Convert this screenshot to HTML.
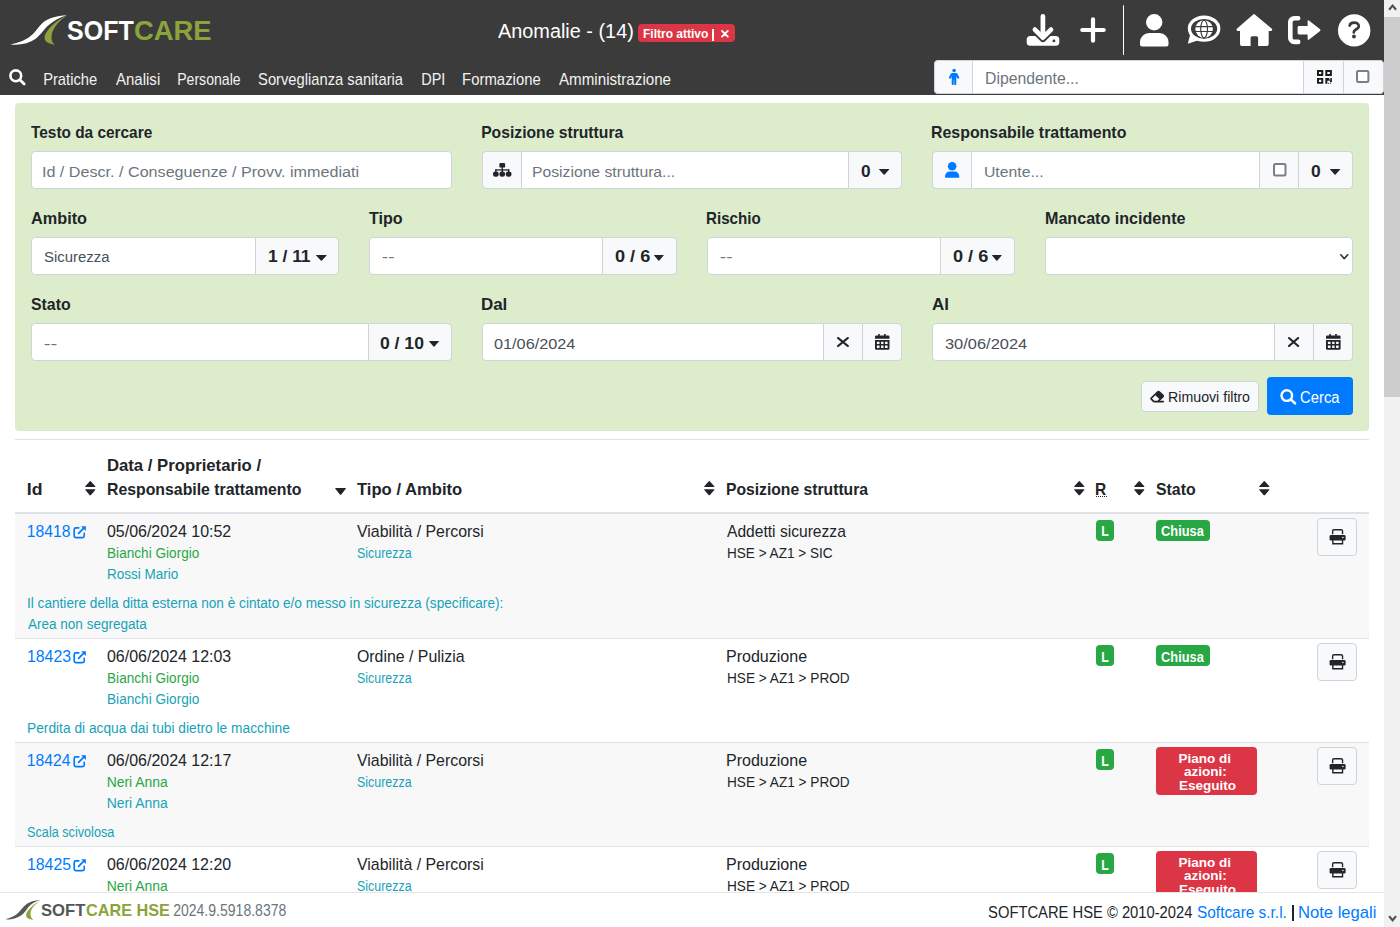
<!DOCTYPE html>
<html><head><meta charset="utf-8"><title>Anomalie</title>
<style>
html,body{margin:0;padding:0;width:1400px;height:927px;overflow:hidden;background:#fff;font-family:"Liberation Sans",sans-serif}
.t{position:absolute;white-space:nowrap;font-family:"Liberation Sans",sans-serif}
.r{position:absolute}
.s{position:absolute;overflow:visible}
</style></head><body>
<div class="r" style="left:0px;top:0px;width:1384px;height:95px;background:#3b3b3b;box-sizing:border-box;"></div>
<svg class="s" style="left:0px;top:0px;width:80px;height:50px;" viewBox="0 0 80 50" preserveAspectRatio="none"><path fill="#fff" d="M10.5,44.5 C18,43 27,40 33,34 C37,30 39,26 43,22.5 C48,18.5 56,15.5 67,15.2 C60,17 53,21 47,26.5 C43,31 40,35 36,38.5 C29,43.5 20,45.5 10.5,44.5 Z"/><path fill="#8ca33c" d="M67,15.5 C58,19.5 50,26 46,33 C43,38 44,43 55,45 C51,42 50.5,37 53,30.5 C56,24 61,19 67,15.5 Z"/></svg>
<div class="t" style="left:66.62px;top:17px;font-size:27.75px;line-height:27.75px;color:#fff;font-weight:bold;transform:scaleX(0.9006);transform-origin:0.78px 0;">SOFT</div>
<div class="t" style="left:133.76px;top:17px;font-size:27.75px;line-height:27.75px;color:#8ca33c;font-weight:bold;transform:scaleX(0.9866);transform-origin:1.14px 0;">CARE</div>
<div class="t" style="left:498.36px;top:21px;font-size:20.35px;line-height:20.35px;color:#fff;transform:scaleX(0.9767);transform-origin:0.04px 0;">Anomalie - (14)</div>
<div class="r" style="left:638px;top:24px;width:97px;height:18px;background:#dc3545;box-sizing:border-box;border-radius:4px;"></div>
<div class="t" style="left:642.77px;top:28px;font-size:12.50px;line-height:12.50px;color:#fff;font-weight:bold;transform:scaleX(0.9588);transform-origin:0.82px 0;">Filtro attivo</div>
<div class="r" style="left:711.8px;top:29px;width:2.0px;height:12px;background:#fff;box-sizing:border-box;"></div>
<svg class="s" style="left:720.8px;top:29.6px;width:7.800000000000068px;height:7.699999999999996px;" viewBox="0 0 8 8" preserveAspectRatio="none"><path d="M1,1 L7,7 M7,1 L1,7" stroke="#fff" stroke-width="1.9" stroke-linecap="round"/></svg>
<svg class="s" style="left:1026px;top:14px;width:34px;height:32px;" viewBox="0 0 34 32" preserveAspectRatio="none"><rect x="0.7" y="21.9" width="32.6" height="9.9" rx="3.6" fill="#fff"/><path d="M10.5,18.2 L16.9,24.4 L23.3,18.2" fill="none" stroke="#3b3b3b" stroke-width="7.2" stroke-linecap="round" stroke-linejoin="round"/><path d="M16.9,2.3 V21 M8.9,15.6 L16.9,23.7 L25,15.6" fill="none" stroke="#fff" stroke-width="4.7" stroke-linecap="round" stroke-linejoin="round"/><circle cx="27.9" cy="26.9" r="1.45" fill="#3b3b3b"/></svg>
<svg class="s" style="left:1080px;top:17px;width:26px;height:26px;" viewBox="0 0 26 26" preserveAspectRatio="none"><path d="M13,2.3 V23.7 M2.3,13 H23.7" stroke="#fff" stroke-width="4.2" stroke-linecap="round"/></svg>
<div class="r" style="left:1122.8px;top:4.9px;width:1.6000000000001364px;height:50.300000000000004px;background:#fff;box-sizing:border-box;border-radius:1px;"></div>
<svg class="s" style="left:1139.7px;top:13.7px;width:28.5px;height:32.400000000000006px;" viewBox="0 0 28.5 32.4" preserveAspectRatio="none"><circle cx="14.2" cy="8.2" r="8.2" fill="#fff"/><path fill="#fff" d="M9,19 h10.5 a9,9 0 0 1 9,9 v2.4 a2,2 0 0 1 -2,2 h-24.5 a2,2 0 0 1 -2,-2 v-2.4 a9,9 0 0 1 9,-9 z"/></svg>
<svg class="s" style="left:1188px;top:15.7px;width:32.40000000000009px;height:28.2px;" viewBox="0 0 32.4 28.2" preserveAspectRatio="none"><path fill="#fff" fill-rule="evenodd" d="M-0.2,12.6 A16.3,13.2 0 1 1 32.4,12.6 A16.3,13.2 0 1 1 -0.2,12.6 Z M3,12.8 A13.1,9.9 0 1 0 29.2,12.8 A13.1,9.9 0 1 0 3,12.8 Z"/><path fill="#fff" d="M2.2,18.5 L9.5,24.6 L-0.2,27.8 Z"/><circle cx="16.1" cy="13.1" r="8.8" fill="#fff"/><path fill="none" stroke="#3b3b3b" stroke-width="1.15" d="M7,10.6 H25.2 M7,15.5 H25.2"/><ellipse cx="16.1" cy="13.1" rx="3.4" ry="8.8" fill="none" stroke="#3b3b3b" stroke-width="1.15"/></svg>
<svg class="s" style="left:1235.7px;top:13.9px;width:36.299999999999955px;height:32.2px;" viewBox="0 0 36.3 32.2" preserveAspectRatio="none"><path fill="#fff" d="M17.2,0.4 a1.2,1.2 0 0 1 1.6,0 L35.6,14.6 a1.3,1.3 0 0 1 -0.8,2.4 h-2.1 v12.9 a2,2 0 0 1 -2,2 h-8.6 v-8.1 a1.6,1.6 0 0 0 -1.6,-1.6 h-4.3 a1.6,1.6 0 0 0 -1.6,1.6 v8.1 h-8.6 a2,2 0 0 1 -2,-2 v-12.9 h-2.1 a1.3,1.3 0 0 1 -0.8,-2.4 Z"/></svg>
<svg class="s" style="left:1287.9px;top:15.7px;width:32.799999999999955px;height:28.2px;" viewBox="0 0 32.8 28.2" preserveAspectRatio="none"><path fill="none" stroke="#fff" stroke-width="4.6" stroke-linecap="round" d="M10.2,2.3 H6.3 a4,4 0 0 0 -4,4 V21.9 a4,4 0 0 0 4,4 H10.2"/><path fill="#fff" d="M11,10 H19.6 V5.6 Q19.6,3.5 21.2,4.8 L32.1,13.3 Q32.9,14.2 32.1,15.1 L21.2,23.4 Q19.6,24.7 19.6,22.6 V18.4 H11 Q9.6,18.4 9.6,17 V11.4 Q9.6,10 11,10 Z"/></svg>
<svg class="s" style="left:1337.9px;top:13.6px;width:32.399999999999864px;height:32.8px;" viewBox="0 0 32.4 32.8" preserveAspectRatio="none"><circle cx="16.2" cy="16.4" r="16.2" fill="#fff"/><path fill="none" stroke="#3b3b3b" stroke-width="2.7" stroke-linecap="round" stroke-linejoin="round" d="M11.7,11.6 C12,9.6 13.9,8.6 16.2,8.6 C18.8,8.6 20.8,10.1 20.8,12.3 C20.8,14.3 18.8,15.1 16.8,16.3 Q15.8,17 15.8,18.4"/><circle cx="16" cy="22.5" r="1.95" fill="#3b3b3b"/></svg>
<svg class="s" style="left:9.2px;top:69px;width:16.7px;height:16px;" viewBox="0 0 16.7 16" preserveAspectRatio="none"><circle cx="6.8" cy="6.8" r="5.4" fill="none" stroke="#fff" stroke-width="2.6"/><path d="M10.8,10.8 L15.2,14.9" stroke="#fff" stroke-width="2.8" stroke-linecap="round"/></svg>
<div class="t" style="left:43.26px;top:71px;font-size:16.40px;line-height:16.40px;color:#f2f2f2;transform:scaleX(0.8986);transform-origin:1.34px 0;">Pratiche</div>
<div class="t" style="left:115.57px;top:71px;font-size:16.40px;line-height:16.40px;color:#f2f2f2;transform:scaleX(0.9156);transform-origin:0.03px 0;">Analisi</div>
<div class="t" style="left:176.76px;top:71px;font-size:16.40px;line-height:16.40px;color:#f2f2f2;transform:scaleX(0.8595);transform-origin:1.34px 0;">Personale</div>
<div class="t" style="left:258.06px;top:71px;font-size:16.40px;line-height:16.40px;color:#f2f2f2;transform:scaleX(0.8989);transform-origin:0.74px 0;">Sorveglianza sanitaria</div>
<div class="t" style="left:421.06px;top:71px;font-size:16.40px;line-height:16.40px;color:#f2f2f2;transform:scaleX(0.8862);transform-origin:1.34px 0;">DPI</div>
<div class="t" style="left:461.86px;top:71px;font-size:16.40px;line-height:16.40px;color:#f2f2f2;transform:scaleX(0.9086);transform-origin:1.34px 0;">Formazione</div>
<div class="t" style="left:558.77px;top:71px;font-size:16.40px;line-height:16.40px;color:#f2f2f2;transform:scaleX(0.9248);transform-origin:0.03px 0;">Amministrazione</div>
<div class="r" style="left:934px;top:60px;width:450px;height:34px;background:#fff;box-sizing:border-box;border:1px solid #ced4da;border-radius:4px;"></div>
<div class="r" style="left:934px;top:60px;width:39px;height:34px;background:#f8f9fa;box-sizing:border-box;border:1px solid #ced4da;border-radius:4px 0 0 4px;"></div>
<div class="r" style="left:1303px;top:60px;width:41px;height:34px;background:#f8f9fa;box-sizing:border-box;border:1px solid #ced4da;"></div>
<div class="r" style="left:1343px;top:60px;width:41px;height:34px;background:#f8f9fa;box-sizing:border-box;border:1px solid #ced4da;border-radius:0 4px 4px 0;"></div>
<svg class="s" style="left:948.7px;top:69px;width:10.399999999999977px;height:16px;" viewBox="0 0 10.4 16" preserveAspectRatio="none"><circle cx="5.1" cy="1.6" r="1.75" fill="#007bff"/><path fill="#007bff" d="M3.2,4 H7 a1.6,1.6 0 0 1 1.4,0.8 L10.2,8.2 a1,1 0 0 1 -1.8,1 L7.3,7.5 V15 a1,1 0 0 1 -1,1 h-0.3 a0.8,0.8 0 0 1 -0.8,-0.8 V11 h-0.4 V15.2 a0.8,0.8 0 0 1 -0.8,0.8 h-0.3 a1,1 0 0 1 -1,-1 V7.5 L1.8,9.2 a1,1 0 0 1 -1.8,-1 L1.8,4.8 a1.6,1.6 0 0 1 1.4,-0.8 Z"/></svg>
<div class="t" style="left:984.93px;top:71px;font-size:16.70px;line-height:16.70px;color:#6c757d;transform:scaleX(0.9444);transform-origin:1.37px 0;">Dipendente...</div>
<svg class="s" style="left:1316.7px;top:69.9px;width:14.899999999999864px;height:13.799999999999997px;" viewBox="0 0 15 13.8" preserveAspectRatio="none"><g fill="#1c1c1c"><path fill-rule="evenodd" d="M0,0 h6.3 v5.9 h-6.3z M2,1.9 v2.1 h2.3 v-2.1z"/><path fill-rule="evenodd" d="M8.4,0 h6.6 v5.9 h-6.6z M10.4,1.9 v2.1 h2.6 v-2.1z"/><path fill-rule="evenodd" d="M0,7.9 h6.3 v5.9 h-6.3z M2,9.8 v2.1 h2.3 v-2.1z"/><path d="M8.4,7.9 h2 v5.9 h-2z M10.4,7.9 h1.4 l1.6,2.4 v-2.4 h1.6 v4.3 h-1.4 l-1.6,-2.4 v1 h-1.6z"/><rect x="11" y="12.8" width="1" height="1"/><rect x="13" y="12.8" width="1" height="1"/></g></svg>
<svg class="s" style="left:1356.4px;top:70.3px;width:13.399999999999864px;height:13.100000000000009px;" viewBox="0 0 13.4 13.1" preserveAspectRatio="none"><rect x="1" y="1" width="11.4" height="11.1" rx="1.5" fill="#fff" stroke="#7d7d87" stroke-width="2"/></svg>
<div class="r" style="left:15px;top:103px;width:1354px;height:328px;background:#ddedcb;box-sizing:border-box;border-radius:4px;border-right:1px solid #d8e9c5;border-bottom:1px solid #d8e9c5;"></div>
<div class="t" style="left:31.23px;top:125px;font-size:15.70px;line-height:15.70px;color:#212529;font-weight:bold;transform:scaleX(0.9812);transform-origin:0.17px 0;">Testo da cercare</div>
<div class="t" style="left:481.16px;top:125px;font-size:15.70px;line-height:15.70px;color:#212529;font-weight:bold;">Posizione struttura</div>
<div class="t" style="left:931.46px;top:125px;font-size:15.70px;line-height:15.70px;color:#212529;font-weight:bold;transform:scaleX(1.0143);transform-origin:1.04px 0;">Responsabile trattamento</div>
<div class="t" style="left:31.32px;top:211px;font-size:15.70px;line-height:15.70px;color:#212529;font-weight:bold;transform:scaleX(1.0380);transform-origin:0.38px 0;">Ambito</div>
<div class="t" style="left:369.13px;top:211px;font-size:15.70px;line-height:15.70px;color:#212529;font-weight:bold;transform:scaleX(1.0262);transform-origin:0.17px 0;">Tipo</div>
<div class="t" style="left:706.16px;top:211px;font-size:15.70px;line-height:15.70px;color:#212529;font-weight:bold;transform:scaleX(0.9644);transform-origin:1.04px 0;">Rischio</div>
<div class="t" style="left:1044.86px;top:211px;font-size:15.70px;line-height:15.70px;color:#212529;font-weight:bold;transform:scaleX(1.0266);transform-origin:1.04px 0;">Mancato incidente</div>
<div class="t" style="left:30.76px;top:297px;font-size:15.70px;line-height:15.70px;color:#212529;font-weight:bold;transform:scaleX(1.0105);transform-origin:0.44px 0;">Stato</div>
<div class="t" style="left:481.16px;top:297px;font-size:15.70px;line-height:15.70px;color:#212529;font-weight:bold;transform:scaleX(1.0810);transform-origin:1.04px 0;">Dal</div>
<div class="t" style="left:932.12px;top:297px;font-size:15.70px;line-height:15.70px;color:#212529;font-weight:bold;transform:scaleX(1.0827);transform-origin:0.38px 0;">Al</div>
<div class="r" style="left:31px;top:151px;width:421px;height:38px;background:#fff;box-sizing:border-box;border:1px solid #ced4da;border-radius:4px;"></div>
<div class="t" style="left:42.38px;top:164px;font-size:15.40px;line-height:15.40px;color:#6c757d;transform:scaleX(1.0481);transform-origin:1.42px 0;">Id / Descr. / Conseguenze / Provv. immediati</div>
<div class="r" style="left:482px;top:151px;width:420px;height:38px;background:#fff;box-sizing:border-box;border:1px solid #ced4da;border-radius:4px;"></div>
<div class="r" style="left:482px;top:151px;width:40px;height:38px;background:#f8f9fa;box-sizing:border-box;border:1px solid #ced4da;border-radius:4px 0 0 4px;"></div>
<div class="r" style="left:848px;top:151px;width:54px;height:38px;background:#f8f9fa;box-sizing:border-box;border:1px solid #ced4da;border-radius:0 4px 4px 0;"></div>
<svg class="s" style="left:492.7px;top:163px;width:18.5px;height:13.800000000000011px;" viewBox="0 0 18.5 13.8" preserveAspectRatio="none"><g fill="#212529"><rect x="6.4" y="0" width="5.7" height="4.6" rx="1.2"/><rect x="8.6" y="4" width="1.3" height="3"/><rect x="2.2" y="6.3" width="14.1" height="1.3"/><rect x="2.2" y="6.3" width="1.3" height="3"/><rect x="8.6" y="6.3" width="1.3" height="3"/><rect x="15" y="6.3" width="1.3" height="3"/><rect x="0" y="8.4" width="5.7" height="5.4" rx="2.4"/><rect x="6.4" y="8.4" width="5.7" height="5.4" rx="2.4"/><rect x="12.8" y="8.4" width="5.7" height="5.4" rx="2.4"/></g></svg>
<div class="t" style="left:532.44px;top:164px;font-size:15.40px;line-height:15.40px;color:#6c757d;transform:scaleX(1.0210);transform-origin:1.26px 0;">Posizione struttura...</div>
<div class="t" style="left:860.68px;top:164px;font-size:16.00px;line-height:16.00px;color:#212529;font-weight:bold;transform:scaleX(1.0744);transform-origin:0.62px 0;">0</div>
<svg class="s" style="left:879.2px;top:169px;width:10.299999999999955px;height:6px;" viewBox="0 0 10 6" preserveAspectRatio="none"><path fill="#212529" d="M0.3,0 h9.4 a0.3,0.3 0 0 1 0.2,0.5 l-4.6,5.2 a0.4,0.4 0 0 1 -0.6,0 l-4.6,-5.2 a0.3,0.3 0 0 1 0.2,-0.5 z"/></svg>
<div class="r" style="left:932px;top:151px;width:421px;height:38px;background:#fff;box-sizing:border-box;border:1px solid #ced4da;border-radius:4px;"></div>
<div class="r" style="left:932px;top:151px;width:40px;height:38px;background:#f8f9fa;box-sizing:border-box;border:1px solid #ced4da;border-radius:4px 0 0 4px;"></div>
<div class="r" style="left:1259px;top:151px;width:40px;height:38px;background:#f8f9fa;box-sizing:border-box;border:1px solid #ced4da;border-radius:0;"></div>
<div class="r" style="left:1298px;top:151px;width:55px;height:38px;background:#f8f9fa;box-sizing:border-box;border:1px solid #ced4da;border-radius:0 4px 4px 0;"></div>
<svg class="s" style="left:945.4px;top:162px;width:14.300000000000068px;height:15.800000000000011px;" viewBox="0 0 14.3 15.8" preserveAspectRatio="none"><circle cx="7.15" cy="4.3" r="4.3" fill="#007bff"/><path fill="#007bff" d="M4.6,9.6 h5.1 a4.6,4.6 0 0 1 4.6,4.6 v0.6 a1,1 0 0 1 -1,1 h-12.3 a1,1 0 0 1 -1,-1 v-0.6 a4.6,4.6 0 0 1 4.6,-4.6z"/></svg>
<div class="t" style="left:983.61px;top:164px;font-size:15.40px;line-height:15.40px;color:#6c757d;transform:scaleX(1.0247);transform-origin:1.19px 0;">Utente...</div>
<svg class="s" style="left:1273.2px;top:163.1px;width:13.5px;height:13.5px;" viewBox="0 0 13.5 13.5" preserveAspectRatio="none"><rect x="1" y="1" width="11.5" height="11.5" rx="1.5" fill="#fff" stroke="#7d7d87" stroke-width="2"/></svg>
<div class="t" style="left:1311.38px;top:164px;font-size:16.00px;line-height:16.00px;color:#212529;font-weight:bold;transform:scaleX(1.0875);transform-origin:0.62px 0;">0</div>
<svg class="s" style="left:1329.9px;top:169px;width:10.199999999999818px;height:6px;" viewBox="0 0 10 6" preserveAspectRatio="none"><path fill="#212529" d="M0.3,0 h9.4 a0.3,0.3 0 0 1 0.2,0.5 l-4.6,5.2 a0.4,0.4 0 0 1 -0.6,0 l-4.6,-5.2 a0.3,0.3 0 0 1 0.2,-0.5 z"/></svg>
<div class="r" style="left:31px;top:237px;width:308px;height:38px;background:#fff;box-sizing:border-box;border:1px solid #ced4da;border-radius:4px;"></div>
<div class="r" style="left:255px;top:237px;width:84px;height:38px;background:#f8f9fa;box-sizing:border-box;border:1px solid #ced4da;border-radius:0 4px 4px 0;"></div>
<div class="t" style="left:43.61px;top:249px;font-size:15.40px;line-height:15.40px;color:#495057;transform:scaleX(0.9680);transform-origin:0.69px 0;">Sicurezza</div>
<div class="t" style="left:267.91px;top:249px;font-size:16.00px;line-height:16.00px;color:#212529;font-weight:bold;transform:scaleX(1.0894);transform-origin:0.99px 0;">1 / 11</div>
<svg class="s" style="left:315.8px;top:255.2px;width:10.699999999999989px;height:6.0px;" viewBox="0 0 10 6" preserveAspectRatio="none"><path fill="#212529" d="M0.3,0 h9.4 a0.3,0.3 0 0 1 0.2,0.5 l-4.6,5.2 a0.4,0.4 0 0 1 -0.6,0 l-4.6,-5.2 a0.3,0.3 0 0 1 0.2,-0.5 z"/></svg>
<div class="r" style="left:369px;top:237px;width:308px;height:38px;background:#fff;box-sizing:border-box;border:1px solid #ced4da;border-radius:4px;"></div>
<div class="r" style="left:602px;top:237px;width:75px;height:38px;background:#f8f9fa;box-sizing:border-box;border:1px solid #ced4da;border-radius:0 4px 4px 0;"></div>
<div class="t" style="left:382.32px;top:249px;font-size:15.40px;line-height:15.40px;color:#6c757d;transform:scaleX(1.2358);transform-origin:0.68px 0;">--</div>
<div class="t" style="left:614.88px;top:249px;font-size:16.00px;line-height:16.00px;color:#212529;font-weight:bold;transform:scaleX(1.1351);transform-origin:0.62px 0;">0 / 6</div>
<svg class="s" style="left:654.3px;top:255.2px;width:9.700000000000045px;height:6.0px;" viewBox="0 0 10 6" preserveAspectRatio="none"><path fill="#212529" d="M0.3,0 h9.4 a0.3,0.3 0 0 1 0.2,0.5 l-4.6,5.2 a0.4,0.4 0 0 1 -0.6,0 l-4.6,-5.2 a0.3,0.3 0 0 1 0.2,-0.5 z"/></svg>
<div class="r" style="left:707px;top:237px;width:308px;height:38px;background:#fff;box-sizing:border-box;border:1px solid #ced4da;border-radius:4px;"></div>
<div class="r" style="left:940px;top:237px;width:75px;height:38px;background:#f8f9fa;box-sizing:border-box;border:1px solid #ced4da;border-radius:0 4px 4px 0;"></div>
<div class="t" style="left:720.32px;top:249px;font-size:15.40px;line-height:15.40px;color:#6c757d;transform:scaleX(1.2358);transform-origin:0.68px 0;">--</div>
<div class="t" style="left:952.88px;top:249px;font-size:16.00px;line-height:16.00px;color:#212529;font-weight:bold;transform:scaleX(1.1351);transform-origin:0.62px 0;">0 / 6</div>
<svg class="s" style="left:992.3px;top:255.2px;width:9.700000000000045px;height:6.0px;" viewBox="0 0 10 6" preserveAspectRatio="none"><path fill="#212529" d="M0.3,0 h9.4 a0.3,0.3 0 0 1 0.2,0.5 l-4.6,5.2 a0.4,0.4 0 0 1 -0.6,0 l-4.6,-5.2 a0.3,0.3 0 0 1 0.2,-0.5 z"/></svg>
<div class="r" style="left:1045px;top:237px;width:308px;height:38px;background:#fff;box-sizing:border-box;border:1px solid #ced4da;border-radius:4px;"></div>
<svg class="s" style="left:1339.6px;top:253.6px;width:8.5px;height:6.000000000000028px;" viewBox="0 0 8.5 6" preserveAspectRatio="none"><path d="M0.8,0.8 L4.25,4.6 L7.7,0.8" fill="none" stroke="#343a40" stroke-width="1.7" stroke-linecap="round" stroke-linejoin="round"/></svg>
<div class="r" style="left:31px;top:323px;width:421px;height:38px;background:#fff;box-sizing:border-box;border:1px solid #ced4da;border-radius:4px;"></div>
<div class="r" style="left:368px;top:323px;width:84px;height:38px;background:#f8f9fa;box-sizing:border-box;border:1px solid #ced4da;border-radius:0 4px 4px 0;"></div>
<div class="t" style="left:43.92px;top:336px;font-size:15.40px;line-height:15.40px;color:#6c757d;transform:scaleX(1.3257);transform-origin:0.68px 0;">--</div>
<div class="t" style="left:380.38px;top:336px;font-size:16.00px;line-height:16.00px;color:#212529;font-weight:bold;transform:scaleX(1.0988);transform-origin:0.62px 0;">0 / 10</div>
<svg class="s" style="left:429px;top:341.1px;width:10px;height:6.0px;" viewBox="0 0 10 6" preserveAspectRatio="none"><path fill="#212529" d="M0.3,0 h9.4 a0.3,0.3 0 0 1 0.2,0.5 l-4.6,5.2 a0.4,0.4 0 0 1 -0.6,0 l-4.6,-5.2 a0.3,0.3 0 0 1 0.2,-0.5 z"/></svg>
<div class="r" style="left:482px;top:323px;width:420px;height:38px;background:#fff;box-sizing:border-box;border:1px solid #ced4da;border-radius:4px;"></div>
<div class="r" style="left:823px;top:323px;width:40px;height:38px;background:#f8f9fa;box-sizing:border-box;border:1px solid #ced4da;border-radius:0;"></div>
<div class="r" style="left:862px;top:323px;width:40px;height:38px;background:#f8f9fa;box-sizing:border-box;border:1px solid #ced4da;border-radius:0 4px 4px 0;"></div>
<div class="t" style="left:494.40px;top:336px;font-size:15.40px;line-height:15.40px;color:#495057;transform:scaleX(1.0575);transform-origin:0.60px 0;">01/06/2024</div>
<svg class="s" style="left:837.4px;top:337px;width:11.899999999999977px;height:10px;" viewBox="0 0 11 10" preserveAspectRatio="none"><path d="M1,1 L10,9 M10,1 L1,9" stroke="#212529" stroke-width="2.1" stroke-linecap="round"/></svg>
<svg class="s" style="left:875px;top:334px;width:14.5px;height:15.800000000000011px;" viewBox="0 0 14.5 16" preserveAspectRatio="none"><g fill="#212529"><rect x="3.2" y="0" width="1.6" height="2.5"/><rect x="9.1" y="0" width="1.6" height="2.5"/><path d="M1.3,1.5 h11.9 a1.3,1.3 0 0 1 1.3,1.3 v1.9 h-14.5 v-1.9 a1.3,1.3 0 0 1 1.3,-1.3z"/><path fill-rule="evenodd" d="M0,6 h14.5 v8.6 a1.3,1.3 0 0 1 -1.3,1.3 h-11.9 a1.3,1.3 0 0 1 -1.3,-1.3z M1.9,7.8 h2.6 v2.4 h-2.6z M6.1,7.8 h2.4 v2.4 h-2.4z M10,7.8 h2.6 v2.4 h-2.6z M1.9,11.7 h2.6 v2.5 h-2.6z M6.1,11.7 h2.4 v2.5 h-2.4z M10,11.7 h2.6 v2.5 h-2.6z"/></g></svg>
<div class="r" style="left:932px;top:323px;width:421px;height:38px;background:#fff;box-sizing:border-box;border:1px solid #ced4da;border-radius:4px;"></div>
<div class="r" style="left:1274px;top:323px;width:40px;height:38px;background:#f8f9fa;box-sizing:border-box;border:1px solid #ced4da;border-radius:0;"></div>
<div class="r" style="left:1313px;top:323px;width:40px;height:38px;background:#f8f9fa;box-sizing:border-box;border:1px solid #ced4da;border-radius:0 4px 4px 0;"></div>
<div class="t" style="left:945.01px;top:336px;font-size:15.40px;line-height:15.40px;color:#495057;transform:scaleX(1.0678);transform-origin:0.59px 0;">30/06/2024</div>
<svg class="s" style="left:1288px;top:337px;width:11.200000000000045px;height:10px;" viewBox="0 0 11 10" preserveAspectRatio="none"><path d="M1,1 L10,9 M10,1 L1,9" stroke="#212529" stroke-width="2.1" stroke-linecap="round"/></svg>
<svg class="s" style="left:1325.8px;top:334px;width:14.600000000000136px;height:15.800000000000011px;" viewBox="0 0 14.5 16" preserveAspectRatio="none"><g fill="#212529"><rect x="3.2" y="0" width="1.6" height="2.5"/><rect x="9.1" y="0" width="1.6" height="2.5"/><path d="M1.3,1.5 h11.9 a1.3,1.3 0 0 1 1.3,1.3 v1.9 h-14.5 v-1.9 a1.3,1.3 0 0 1 1.3,-1.3z"/><path fill-rule="evenodd" d="M0,6 h14.5 v8.6 a1.3,1.3 0 0 1 -1.3,1.3 h-11.9 a1.3,1.3 0 0 1 -1.3,-1.3z M1.9,7.8 h2.6 v2.4 h-2.6z M6.1,7.8 h2.4 v2.4 h-2.4z M10,7.8 h2.6 v2.4 h-2.6z M1.9,11.7 h2.6 v2.5 h-2.6z M6.1,11.7 h2.4 v2.5 h-2.4z M10,11.7 h2.6 v2.5 h-2.6z"/></g></svg>
<div class="r" style="left:1141px;top:381px;width:118px;height:31px;background:#f8f9fa;box-sizing:border-box;border:1px solid #ced4da;border-radius:4px;"></div>
<svg class="s" style="left:1150.3px;top:391.1px;width:14.299999999999955px;height:11.5px;" viewBox="30 50 516 432" preserveAspectRatio="none"><path fill="#212529" d="M290.7 57.4L57.4 290.7c-25 25-25 65.5 0 90.5l80 80c12 12 28.3 18.7 45.3 18.7H288h9.4H512c17.7 0 32-14.3 32-32s-14.3-32-32-32H387.9L518.6 285.3c25-25 25-65.5 0-90.5L381.3 57.4c-25-25-65.5-25-90.5 0zM297.4 416H288l-105.4 0-80-80L227.3 211.3 364.7 348.7 297.4 416z"/></svg>
<div class="t" style="left:1167.98px;top:390px;font-size:14.85px;line-height:14.85px;color:#212529;transform:scaleX(0.9549);transform-origin:1.22px 0;">Rimuovi filtro</div>
<div class="r" style="left:1267px;top:377px;width:86px;height:38px;background:#007bff;box-sizing:border-box;border-radius:4px;"></div>
<svg class="s" style="left:1280px;top:389.3px;width:16.40000000000009px;height:15.5px;" viewBox="0 0 16.4 15.5" preserveAspectRatio="none"><circle cx="6.8" cy="6.6" r="5.3" fill="none" stroke="#fff" stroke-width="2.4"/><path d="M10.8,10.6 L15,14.3" stroke="#fff" stroke-width="2.6" stroke-linecap="round"/></svg>
<div class="t" style="left:1300.20px;top:390px;font-size:16.00px;line-height:16.00px;color:#fff;transform:scaleX(0.9239);transform-origin:0.80px 0;">Cerca</div>
<div class="r" style="left:15px;top:439px;width:1354px;height:1px;background:#dee2e6;box-sizing:border-box;"></div>
<div class="t" style="left:26.96px;top:482px;font-size:15.70px;line-height:15.70px;color:#212529;font-weight:bold;transform:scaleX(1.1275);transform-origin:1.04px 0;">Id</div>
<svg class="s" style="left:84.7px;top:480.9px;width:10.599999999999994px;height:14.300000000000011px;" viewBox="0 0 10.6 14.3" preserveAspectRatio="none"><path fill="#212529" d="M4.6,0.4 a0.9,0.9 0 0 1 1.4,0 l4.3,4.9 a0.5,0.5 0 0 1 -0.4,0.8 h-9.2 a0.5,0.5 0 0 1 -0.4,-0.8z M0.7,8.2 h9.2 a0.5,0.5 0 0 1 0.4,0.8 l-4.3,4.9 a0.9,0.9 0 0 1 -1.4,0 l-4.3,-4.9 a0.5,0.5 0 0 1 0.4,-0.8z"/></svg>
<div class="t" style="left:106.66px;top:458px;font-size:15.70px;line-height:15.70px;color:#212529;font-weight:bold;transform:scaleX(1.0651);transform-origin:1.04px 0;">Data / Proprietario /</div>
<div class="t" style="left:106.66px;top:482px;font-size:15.70px;line-height:15.70px;color:#212529;font-weight:bold;transform:scaleX(1.0091);transform-origin:1.04px 0;">Responsabile trattamento</div>
<svg class="s" style="left:334.5px;top:488.2px;width:11.100000000000023px;height:6.800000000000011px;" viewBox="0 0 11 6.8" preserveAspectRatio="none"><path fill="#212529" d="M0.7,0 h9.6 a0.5,0.5 0 0 1 0.4,0.8 l-4.5,5.6 a0.9,0.9 0 0 1 -1.4,0 l-4.5,-5.6 a0.5,0.5 0 0 1 0.4,-0.8z"/></svg>
<div class="t" style="left:357.43px;top:482px;font-size:15.70px;line-height:15.70px;color:#212529;font-weight:bold;transform:scaleX(1.0594);transform-origin:0.17px 0;">Tipo / Ambito</div>
<svg class="s" style="left:704.3px;top:480.9px;width:10.600000000000023px;height:14.300000000000011px;" viewBox="0 0 10.6 14.3" preserveAspectRatio="none"><path fill="#212529" d="M4.6,0.4 a0.9,0.9 0 0 1 1.4,0 l4.3,4.9 a0.5,0.5 0 0 1 -0.4,0.8 h-9.2 a0.5,0.5 0 0 1 -0.4,-0.8z M0.7,8.2 h9.2 a0.5,0.5 0 0 1 0.4,0.8 l-4.3,4.9 a0.9,0.9 0 0 1 -1.4,0 l-4.3,-4.9 a0.5,0.5 0 0 1 0.4,-0.8z"/></svg>
<div class="t" style="left:725.96px;top:482px;font-size:15.70px;line-height:15.70px;color:#212529;font-weight:bold;">Posizione struttura</div>
<svg class="s" style="left:1073.8px;top:480.8px;width:10.599999999999909px;height:14.300000000000011px;" viewBox="0 0 10.6 14.3" preserveAspectRatio="none"><path fill="#212529" d="M4.6,0.4 a0.9,0.9 0 0 1 1.4,0 l4.3,4.9 a0.5,0.5 0 0 1 -0.4,0.8 h-9.2 a0.5,0.5 0 0 1 -0.4,-0.8z M0.7,8.2 h9.2 a0.5,0.5 0 0 1 0.4,0.8 l-4.3,4.9 a0.9,0.9 0 0 1 -1.4,0 l-4.3,-4.9 a0.5,0.5 0 0 1 0.4,-0.8z"/></svg>
<div class="t" style="left:1095.46px;top:482px;font-size:15.70px;line-height:15.70px;color:#212529;font-weight:bold;transform:scaleX(0.9915);transform-origin:1.04px 0;">R</div>
<div class="r" style="left:1096px;top:496px;width:11px;height:1px;background:none;box-sizing:border-box;border-top:1px dotted #212529;"></div>
<svg class="s" style="left:1133.7px;top:480.8px;width:10.599999999999909px;height:14.300000000000011px;" viewBox="0 0 10.6 14.3" preserveAspectRatio="none"><path fill="#212529" d="M4.6,0.4 a0.9,0.9 0 0 1 1.4,0 l4.3,4.9 a0.5,0.5 0 0 1 -0.4,0.8 h-9.2 a0.5,0.5 0 0 1 -0.4,-0.8z M0.7,8.2 h9.2 a0.5,0.5 0 0 1 0.4,0.8 l-4.3,4.9 a0.9,0.9 0 0 1 -1.4,0 l-4.3,-4.9 a0.5,0.5 0 0 1 0.4,-0.8z"/></svg>
<div class="t" style="left:1155.76px;top:482px;font-size:15.70px;line-height:15.70px;color:#212529;font-weight:bold;transform:scaleX(1.0105);transform-origin:0.44px 0;">Stato</div>
<svg class="s" style="left:1258.6px;top:480.8px;width:10.599999999999909px;height:14.300000000000011px;" viewBox="0 0 10.6 14.3" preserveAspectRatio="none"><path fill="#212529" d="M4.6,0.4 a0.9,0.9 0 0 1 1.4,0 l4.3,4.9 a0.5,0.5 0 0 1 -0.4,0.8 h-9.2 a0.5,0.5 0 0 1 -0.4,-0.8z M0.7,8.2 h9.2 a0.5,0.5 0 0 1 0.4,0.8 l-4.3,4.9 a0.9,0.9 0 0 1 -1.4,0 l-4.3,-4.9 a0.5,0.5 0 0 1 0.4,-0.8z"/></svg>
<div class="r" style="left:15px;top:512px;width:1354px;height:2px;background:#dee2e6;box-sizing:border-box;"></div>
<div class="r" style="left:15px;top:514px;width:1354px;height:124px;background:#f8f8f8;box-sizing:border-box;"></div>
<div class="r" style="left:15px;top:638px;width:1354px;height:1px;background:#dee2e6;box-sizing:border-box;"></div>
<div class="t" style="left:26.81px;top:524px;font-size:15.70px;line-height:15.70px;color:#007bff;">18418</div>
<svg class="s" style="left:70px;top:524px;width:18px;height:18px;" viewBox="0 0 18 18" preserveAspectRatio="none"><path fill="none" stroke="#007bff" stroke-width="1.65" stroke-linecap="round" d="M8.8,3.8 H5.8 a1.6,1.6 0 0 0 -1.6,1.6 V12 a1.6,1.6 0 0 0 1.6,1.6 H12.6 a1.6,1.6 0 0 0 1.6,-1.6 V9.2"/><path fill="#007bff" d="M11.1,2.3 H15.4 a0.5,0.5 0 0 1 0.5,0.5 V7 Z"/><path stroke="#007bff" stroke-width="1.8" stroke-linecap="round" d="M8.6,9.3 L14,3.9"/></svg>
<div class="t" style="left:106.99px;top:524px;font-size:15.70px;line-height:15.70px;color:#212529;transform:scaleX(1.0172);transform-origin:0.61px 0;">05/06/2024 10:52</div>
<div class="t" style="left:106.66px;top:547px;font-size:13.95px;line-height:13.95px;color:#28a745;transform:scaleX(0.9765);transform-origin:1.14px 0;">Bianchi Giorgio</div>
<div class="t" style="left:106.66px;top:568px;font-size:13.95px;line-height:13.95px;color:#17a2b8;transform:scaleX(0.9690);transform-origin:1.14px 0;">Rossi Mario</div>
<div class="t" style="left:357.44px;top:524px;font-size:15.70px;line-height:15.70px;color:#212529;transform:scaleX(1.0117);transform-origin:0.06px 0;">Viabilità / Percorsi</div>
<div class="t" style="left:356.87px;top:547px;font-size:13.95px;line-height:13.95px;color:#17a2b8;transform:scaleX(0.8905);transform-origin:0.63px 0;">Sicurezza</div>
<div class="t" style="left:726.97px;top:524px;font-size:15.70px;line-height:15.70px;color:#212529;transform:scaleX(0.9946);transform-origin:0.03px 0;">Addetti sicurezza</div>
<div class="t" style="left:726.66px;top:547px;font-size:13.95px;line-height:13.95px;color:#212529;transform:scaleX(0.9730);transform-origin:1.14px 0;">HSE &gt; AZ1 &gt; SIC</div>
<div class="r" style="left:1096px;top:520px;width:18px;height:21px;background:#28a745;box-sizing:border-box;border-radius:4px;"></div>
<div class="t" style="left:1100.75px;top:524px;font-size:14.40px;line-height:14.40px;color:#fff;font-weight:bold;transform:scaleX(0.8495);transform-origin:0.95px 0;">L</div>
<div class="r" style="left:1156px;top:520px;width:54px;height:21px;background:#28a745;box-sizing:border-box;border-radius:4px;"></div>
<div class="t" style="left:1160.81px;top:524px;font-size:14.40px;line-height:14.40px;color:#fff;font-weight:bold;transform:scaleX(0.8902);transform-origin:0.59px 0;">Chiusa</div>
<div class="r" style="left:1317px;top:518px;width:40px;height:38px;background:#f8f9fa;box-sizing:border-box;border:1px solid #ced4da;border-radius:4px;"></div>
<svg class="s" style="left:1328.5px;top:529px;width:16.59999999999991px;height:15.799999999999955px;" viewBox="0 0 16.6 15.8" preserveAspectRatio="none"><path d="M3.65,5.2 V2 a1.2,1.2 0 0 1 1.2,-1.2 H12.35 a1.2,1.2 0 0 1 1.2,1.2 V5.2" fill="none" stroke="#212529" stroke-width="1.4"/><rect x="0.6" y="5.9" width="16" height="5.6" rx="1.3" fill="#212529"/><circle cx="13.9" cy="8.5" r="0.75" fill="#fff"/><path d="M3.85,11 V14.75 H13.55 V11" fill="none" stroke="#212529" stroke-width="1.4"/></svg>
<div class="t" style="left:26.52px;top:597px;font-size:13.95px;line-height:13.95px;color:#17a2b8;transform:scaleX(0.9774);transform-origin:1.28px 0;">Il cantiere della ditta esterna non è cintato e/o messo in sicurezza (specificare):</div>
<div class="t" style="left:27.77px;top:618px;font-size:13.95px;line-height:13.95px;color:#17a2b8;transform:scaleX(0.9704);transform-origin:0.03px 0;">Area non segregata</div>
<div class="r" style="left:15px;top:742px;width:1354px;height:1px;background:#dee2e6;box-sizing:border-box;"></div>
<div class="t" style="left:26.81px;top:649px;font-size:15.70px;line-height:15.70px;color:#007bff;transform:scaleX(1.0097);transform-origin:1.19px 0;">18423</div>
<svg class="s" style="left:70px;top:649px;width:18px;height:18px;" viewBox="0 0 18 18" preserveAspectRatio="none"><path fill="none" stroke="#007bff" stroke-width="1.65" stroke-linecap="round" d="M8.8,3.8 H5.8 a1.6,1.6 0 0 0 -1.6,1.6 V12 a1.6,1.6 0 0 0 1.6,1.6 H12.6 a1.6,1.6 0 0 0 1.6,-1.6 V9.2"/><path fill="#007bff" d="M11.1,2.3 H15.4 a0.5,0.5 0 0 1 0.5,0.5 V7 Z"/><path stroke="#007bff" stroke-width="1.8" stroke-linecap="round" d="M8.6,9.3 L14,3.9"/></svg>
<div class="t" style="left:106.99px;top:649px;font-size:15.70px;line-height:15.70px;color:#212529;transform:scaleX(1.0171);transform-origin:0.61px 0;">06/06/2024 12:03</div>
<div class="t" style="left:106.66px;top:672px;font-size:13.95px;line-height:13.95px;color:#28a745;transform:scaleX(0.9765);transform-origin:1.14px 0;">Bianchi Giorgio</div>
<div class="t" style="left:106.66px;top:693px;font-size:13.95px;line-height:13.95px;color:#17a2b8;transform:scaleX(0.9765);transform-origin:1.14px 0;">Bianchi Giorgio</div>
<div class="t" style="left:356.76px;top:649px;font-size:15.70px;line-height:15.70px;color:#212529;transform:scaleX(1.0119);transform-origin:0.74px 0;">Ordine / Pulizia</div>
<div class="t" style="left:356.87px;top:672px;font-size:13.95px;line-height:13.95px;color:#17a2b8;transform:scaleX(0.8905);transform-origin:0.63px 0;">Sicurezza</div>
<div class="t" style="left:725.71px;top:649px;font-size:15.70px;line-height:15.70px;color:#212529;transform:scaleX(1.0226);transform-origin:1.29px 0;">Produzione</div>
<div class="t" style="left:726.66px;top:672px;font-size:13.95px;line-height:13.95px;color:#212529;transform:scaleX(0.9774);transform-origin:1.14px 0;">HSE &gt; AZ1 &gt; PROD</div>
<div class="r" style="left:1096px;top:645px;width:18px;height:21px;background:#28a745;box-sizing:border-box;border-radius:4px;"></div>
<div class="t" style="left:1100.75px;top:650px;font-size:14.40px;line-height:14.40px;color:#fff;font-weight:bold;transform:scaleX(0.8495);transform-origin:0.95px 0;">L</div>
<div class="r" style="left:1156px;top:645px;width:54px;height:21px;background:#28a745;box-sizing:border-box;border-radius:4px;"></div>
<div class="t" style="left:1160.81px;top:650px;font-size:14.40px;line-height:14.40px;color:#fff;font-weight:bold;transform:scaleX(0.8902);transform-origin:0.59px 0;">Chiusa</div>
<div class="r" style="left:1317px;top:643px;width:40px;height:38px;background:#f8f9fa;box-sizing:border-box;border:1px solid #ced4da;border-radius:4px;"></div>
<svg class="s" style="left:1328.5px;top:654px;width:16.59999999999991px;height:15.799999999999955px;" viewBox="0 0 16.6 15.8" preserveAspectRatio="none"><path d="M3.65,5.2 V2 a1.2,1.2 0 0 1 1.2,-1.2 H12.35 a1.2,1.2 0 0 1 1.2,1.2 V5.2" fill="none" stroke="#212529" stroke-width="1.4"/><rect x="0.6" y="5.9" width="16" height="5.6" rx="1.3" fill="#212529"/><circle cx="13.9" cy="8.5" r="0.75" fill="#fff"/><path d="M3.85,11 V14.75 H13.55 V11" fill="none" stroke="#212529" stroke-width="1.4"/></svg>
<div class="t" style="left:26.66px;top:722px;font-size:13.95px;line-height:13.95px;color:#17a2b8;transform:scaleX(0.9864);transform-origin:1.14px 0;">Perdita di acqua dai tubi dietro le macchine</div>
<div class="r" style="left:15px;top:743px;width:1354px;height:103px;background:#f8f8f8;box-sizing:border-box;"></div>
<div class="r" style="left:15px;top:846px;width:1354px;height:1px;background:#dee2e6;box-sizing:border-box;"></div>
<div class="t" style="left:26.81px;top:753px;font-size:15.70px;line-height:15.70px;color:#007bff;">18424</div>
<svg class="s" style="left:70px;top:753px;width:18px;height:18px;" viewBox="0 0 18 18" preserveAspectRatio="none"><path fill="none" stroke="#007bff" stroke-width="1.65" stroke-linecap="round" d="M8.8,3.8 H5.8 a1.6,1.6 0 0 0 -1.6,1.6 V12 a1.6,1.6 0 0 0 1.6,1.6 H12.6 a1.6,1.6 0 0 0 1.6,-1.6 V9.2"/><path fill="#007bff" d="M11.1,2.3 H15.4 a0.5,0.5 0 0 1 0.5,0.5 V7 Z"/><path stroke="#007bff" stroke-width="1.8" stroke-linecap="round" d="M8.6,9.3 L14,3.9"/></svg>
<div class="t" style="left:106.99px;top:753px;font-size:15.70px;line-height:15.70px;color:#212529;transform:scaleX(1.0180);transform-origin:0.61px 0;">06/06/2024 12:17</div>
<div class="t" style="left:106.66px;top:776px;font-size:13.95px;line-height:13.95px;color:#28a745;">Neri Anna</div>
<div class="t" style="left:106.66px;top:797px;font-size:13.95px;line-height:13.95px;color:#17a2b8;">Neri Anna</div>
<div class="t" style="left:357.44px;top:753px;font-size:15.70px;line-height:15.70px;color:#212529;transform:scaleX(1.0117);transform-origin:0.06px 0;">Viabilità / Percorsi</div>
<div class="t" style="left:356.87px;top:776px;font-size:13.95px;line-height:13.95px;color:#17a2b8;transform:scaleX(0.8905);transform-origin:0.63px 0;">Sicurezza</div>
<div class="t" style="left:725.71px;top:753px;font-size:15.70px;line-height:15.70px;color:#212529;transform:scaleX(1.0226);transform-origin:1.29px 0;">Produzione</div>
<div class="t" style="left:726.66px;top:776px;font-size:13.95px;line-height:13.95px;color:#212529;transform:scaleX(0.9774);transform-origin:1.14px 0;">HSE &gt; AZ1 &gt; PROD</div>
<div class="r" style="left:1096px;top:749px;width:18px;height:21px;background:#28a745;box-sizing:border-box;border-radius:4px;"></div>
<div class="t" style="left:1100.75px;top:754px;font-size:14.40px;line-height:14.40px;color:#fff;font-weight:bold;transform:scaleX(0.8495);transform-origin:0.95px 0;">L</div>
<div class="r" style="left:1156px;top:747px;width:101px;height:48px;background:#dc3545;box-sizing:border-box;border-radius:4px;"></div>
<div class="t" style="left:1178.51px;top:752px;font-size:13.50px;line-height:13.50px;color:#fff;font-weight:bold;">Piano di</div>
<div class="t" style="left:1184.11px;top:765px;font-size:13.50px;line-height:13.50px;color:#fff;font-weight:bold;">azioni:</div>
<div class="t" style="left:1178.91px;top:779px;font-size:13.50px;line-height:13.50px;color:#fff;font-weight:bold;">Eseguito</div>
<div class="r" style="left:1317px;top:747px;width:40px;height:38px;background:#f8f9fa;box-sizing:border-box;border:1px solid #ced4da;border-radius:4px;"></div>
<svg class="s" style="left:1328.5px;top:758px;width:16.59999999999991px;height:15.799999999999955px;" viewBox="0 0 16.6 15.8" preserveAspectRatio="none"><path d="M3.65,5.2 V2 a1.2,1.2 0 0 1 1.2,-1.2 H12.35 a1.2,1.2 0 0 1 1.2,1.2 V5.2" fill="none" stroke="#212529" stroke-width="1.4"/><rect x="0.6" y="5.9" width="16" height="5.6" rx="1.3" fill="#212529"/><circle cx="13.9" cy="8.5" r="0.75" fill="#fff"/><path d="M3.85,11 V14.75 H13.55 V11" fill="none" stroke="#212529" stroke-width="1.4"/></svg>
<div class="t" style="left:27.17px;top:826px;font-size:13.95px;line-height:13.95px;color:#17a2b8;transform:scaleX(0.9086);transform-origin:0.63px 0;">Scala scivolosa</div>
<div class="r" style="left:15px;top:950px;width:1354px;height:1px;background:#dee2e6;box-sizing:border-box;"></div>
<div class="t" style="left:26.81px;top:857px;font-size:15.70px;line-height:15.70px;color:#007bff;transform:scaleX(1.0090);transform-origin:1.19px 0;">18425</div>
<svg class="s" style="left:70px;top:857px;width:18px;height:18px;" viewBox="0 0 18 18" preserveAspectRatio="none"><path fill="none" stroke="#007bff" stroke-width="1.65" stroke-linecap="round" d="M8.8,3.8 H5.8 a1.6,1.6 0 0 0 -1.6,1.6 V12 a1.6,1.6 0 0 0 1.6,1.6 H12.6 a1.6,1.6 0 0 0 1.6,-1.6 V9.2"/><path fill="#007bff" d="M11.1,2.3 H15.4 a0.5,0.5 0 0 1 0.5,0.5 V7 Z"/><path stroke="#007bff" stroke-width="1.8" stroke-linecap="round" d="M8.6,9.3 L14,3.9"/></svg>
<div class="t" style="left:106.99px;top:857px;font-size:15.70px;line-height:15.70px;color:#212529;transform:scaleX(1.0164);transform-origin:0.61px 0;">06/06/2024 12:20</div>
<div class="t" style="left:106.66px;top:880px;font-size:13.95px;line-height:13.95px;color:#28a745;">Neri Anna</div>
<div class="t" style="left:106.66px;top:901px;font-size:13.95px;line-height:13.95px;color:#17a2b8;">Neri Anna</div>
<div class="t" style="left:357.44px;top:857px;font-size:15.70px;line-height:15.70px;color:#212529;transform:scaleX(1.0117);transform-origin:0.06px 0;">Viabilità / Percorsi</div>
<div class="t" style="left:356.87px;top:880px;font-size:13.95px;line-height:13.95px;color:#17a2b8;transform:scaleX(0.8905);transform-origin:0.63px 0;">Sicurezza</div>
<div class="t" style="left:725.71px;top:857px;font-size:15.70px;line-height:15.70px;color:#212529;transform:scaleX(1.0226);transform-origin:1.29px 0;">Produzione</div>
<div class="t" style="left:726.66px;top:880px;font-size:13.95px;line-height:13.95px;color:#212529;transform:scaleX(0.9774);transform-origin:1.14px 0;">HSE &gt; AZ1 &gt; PROD</div>
<div class="r" style="left:1096px;top:853px;width:18px;height:21px;background:#28a745;box-sizing:border-box;border-radius:4px;"></div>
<div class="t" style="left:1100.75px;top:858px;font-size:14.40px;line-height:14.40px;color:#fff;font-weight:bold;transform:scaleX(0.8495);transform-origin:0.95px 0;">L</div>
<div class="r" style="left:1156px;top:851px;width:101px;height:48px;background:#dc3545;box-sizing:border-box;border-radius:4px;"></div>
<div class="t" style="left:1178.51px;top:856px;font-size:13.50px;line-height:13.50px;color:#fff;font-weight:bold;">Piano di</div>
<div class="t" style="left:1184.11px;top:869px;font-size:13.50px;line-height:13.50px;color:#fff;font-weight:bold;">azioni:</div>
<div class="t" style="left:1178.91px;top:883px;font-size:13.50px;line-height:13.50px;color:#fff;font-weight:bold;">Eseguito</div>
<div class="r" style="left:1317px;top:851px;width:40px;height:38px;background:#f8f9fa;box-sizing:border-box;border:1px solid #ced4da;border-radius:4px;"></div>
<svg class="s" style="left:1328.5px;top:862px;width:16.59999999999991px;height:15.799999999999955px;" viewBox="0 0 16.6 15.8" preserveAspectRatio="none"><path d="M3.65,5.2 V2 a1.2,1.2 0 0 1 1.2,-1.2 H12.35 a1.2,1.2 0 0 1 1.2,1.2 V5.2" fill="none" stroke="#212529" stroke-width="1.4"/><rect x="0.6" y="5.9" width="16" height="5.6" rx="1.3" fill="#212529"/><circle cx="13.9" cy="8.5" r="0.75" fill="#fff"/><path d="M3.85,11 V14.75 H13.55 V11" fill="none" stroke="#212529" stroke-width="1.4"/></svg>
<div class="t" style="left:27.17px;top:930px;font-size:13.95px;line-height:13.95px;color:#17a2b8;transform:scaleX(0.9086);transform-origin:0.63px 0;">Scala scivolosa</div>
<div class="r" style="left:0px;top:892px;width:1384px;height:35px;background:#fff;box-sizing:border-box;z-index:5;border-top:1px solid #e5e5e5;"></div>
<svg class="s" style="left:0px;top:893px;width:45px;height:34px;z-index:6;" viewBox="0 893 45 34" preserveAspectRatio="none"><path fill="#575757" d="M5.1,919.3 C10,918 14,916.5 17.5,913.5 C21,910.5 23,906.5 27,903.8 C31,901.2 35,900.3 40.5,900.2 C35,901.5 31.5,903.5 29,906.5 C26.5,909.5 24.5,913 21,915.5 C16,919 10,919.8 5.1,919.3 Z"/><path fill="#8ca33c" d="M40.5,900.4 C36,902.5 31,906.5 28,910.5 C26,913.2 25.6,915.6 26.6,917.3 C27.8,919 30.5,919.7 33.4,919.7 C31.2,918.2 30.4,916.2 30.5,913.2 C30.7,909.5 33.5,905 40.5,900.4 Z"/></svg>
<div class="t" style="left:41.34px;top:903px;font-size:16.55px;line-height:16.55px;color:#555555;font-weight:bold;transform:scaleX(1.0090);transform-origin:0.46px 0;z-index:6;">SOFT</div>
<div class="t" style="left:85.92px;top:903px;font-size:16.55px;line-height:16.55px;color:#8ca33c;font-weight:bold;transform:scaleX(0.9821);transform-origin:0.68px 0;z-index:6;">CARE HSE</div>
<div class="t" style="left:172.77px;top:903px;font-size:16.55px;line-height:16.55px;color:#6c757d;transform:scaleX(0.8491);transform-origin:0.83px 0;z-index:6;">2024.9.5918.8378</div>
<div class="t" style="left:988.07px;top:904px;font-size:16.30px;line-height:16.30px;color:#212529;transform:scaleX(0.9061);transform-origin:0.73px 0;z-index:6;">SOFTCARE HSE © 2010-2024</div>
<div class="t" style="left:1197.47px;top:904px;font-size:16.30px;line-height:16.30px;color:#007bff;transform:scaleX(0.9450);transform-origin:0.73px 0;z-index:6;">Softcare s.r.l.</div>
<div class="r" style="left:1292.4px;top:904.8px;width:1.199999999999818px;height:16.0px;background:#212529;box-sizing:border-box;z-index:6;"></div>
<div class="t" style="left:1298.46px;top:904px;font-size:16.30px;line-height:16.30px;color:#007bff;transform:scaleX(1.0203);transform-origin:1.34px 0;z-index:6;">Note legali</div>
<div class="r" style="left:1384px;top:0px;width:16px;height:927px;background:#f1f1f1;box-sizing:border-box;z-index:7;"></div>
<div class="r" style="left:1384px;top:17px;width:16px;height:380px;background:#cdcdcd;box-sizing:border-box;z-index:8;"></div>
<svg class="s" style="left:1387.8px;top:4.3px;width:9.200000000000045px;height:6.8999999999999995px;z-index:8;" viewBox="0 0 9.2 6.9" preserveAspectRatio="none"><path d="M1.1,5.8 L4.6,1.6 L8.1,5.8" fill="none" stroke="#505050" stroke-width="2.1"/></svg>
<svg class="s" style="left:1387.8px;top:915.3px;width:9.200000000000045px;height:6.900000000000091px;z-index:8;" viewBox="0 0 9.2 6.9" preserveAspectRatio="none"><path d="M1.1,1.1 L4.6,5.3 L8.1,1.1" fill="none" stroke="#505050" stroke-width="2.1"/></svg>
</body></html>
